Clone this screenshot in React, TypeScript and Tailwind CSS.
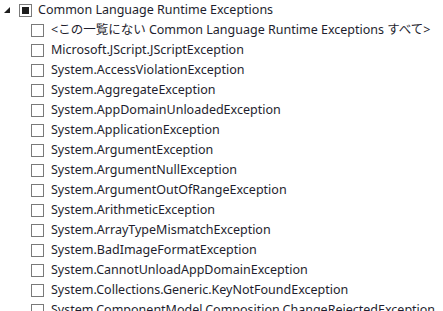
const items = [
  "<この一覧にない Common Language Runtime Exceptions すべて>",
  "Microsoft.JScript.JScriptException",
  "System.AccessViolationException",
  "System.AggregateException",
  "System.AppDomainUnloadedException",
  "System.ApplicationException",
  "System.ArgumentException",
  "System.ArgumentNullException",
  "System.ArgumentOutOfRangeException",
  "System.ArithmeticException",
  "System.ArrayTypeMismatchException",
  "System.BadImageFormatException",
  "System.CannotUnloadAppDomainException",
  "System.Collections.Generic.KeyNotFoundException",
  "System.ComponentModel.Composition.ChangeRejectedException",
];

function Box({ filled }: { filled?: boolean }) {
  return (
    <span className="flex h-[13px] w-[13px] shrink-0 items-center justify-center border border-[#7a7a7a] bg-white">
      {filled && <span className="h-[7px] w-[7px] bg-[#1e1e1e]" />}
    </span>
  );
}

export default function App() {
  return (
    <div
      className="h-[311px] w-[443px] overflow-hidden bg-white text-[12.5px] text-[#1e1e2e]"
      style={{ fontFamily: '"Noto Sans", "Noto Sans CJK JP", sans-serif' }}
    >
      <div className="flex h-5 items-center whitespace-nowrap">
        <svg className="ml-[4px] mr-[9px] shrink-0" width="6" height="6" viewBox="0 0 6 6">
          <polygon points="6,0 6,6 0,6" fill="#1e1e1e" />
        </svg>
        <Box filled />
        <span className="ml-[6px]">Common Language Runtime Exceptions</span>
      </div>
      {items.map((t) => (
        <div key={t} className="flex h-5 items-center whitespace-nowrap pl-[31px]">
          <Box />
          <span className="ml-[7px]">{t}</span>
        </div>
      ))}
    </div>
  );
}
